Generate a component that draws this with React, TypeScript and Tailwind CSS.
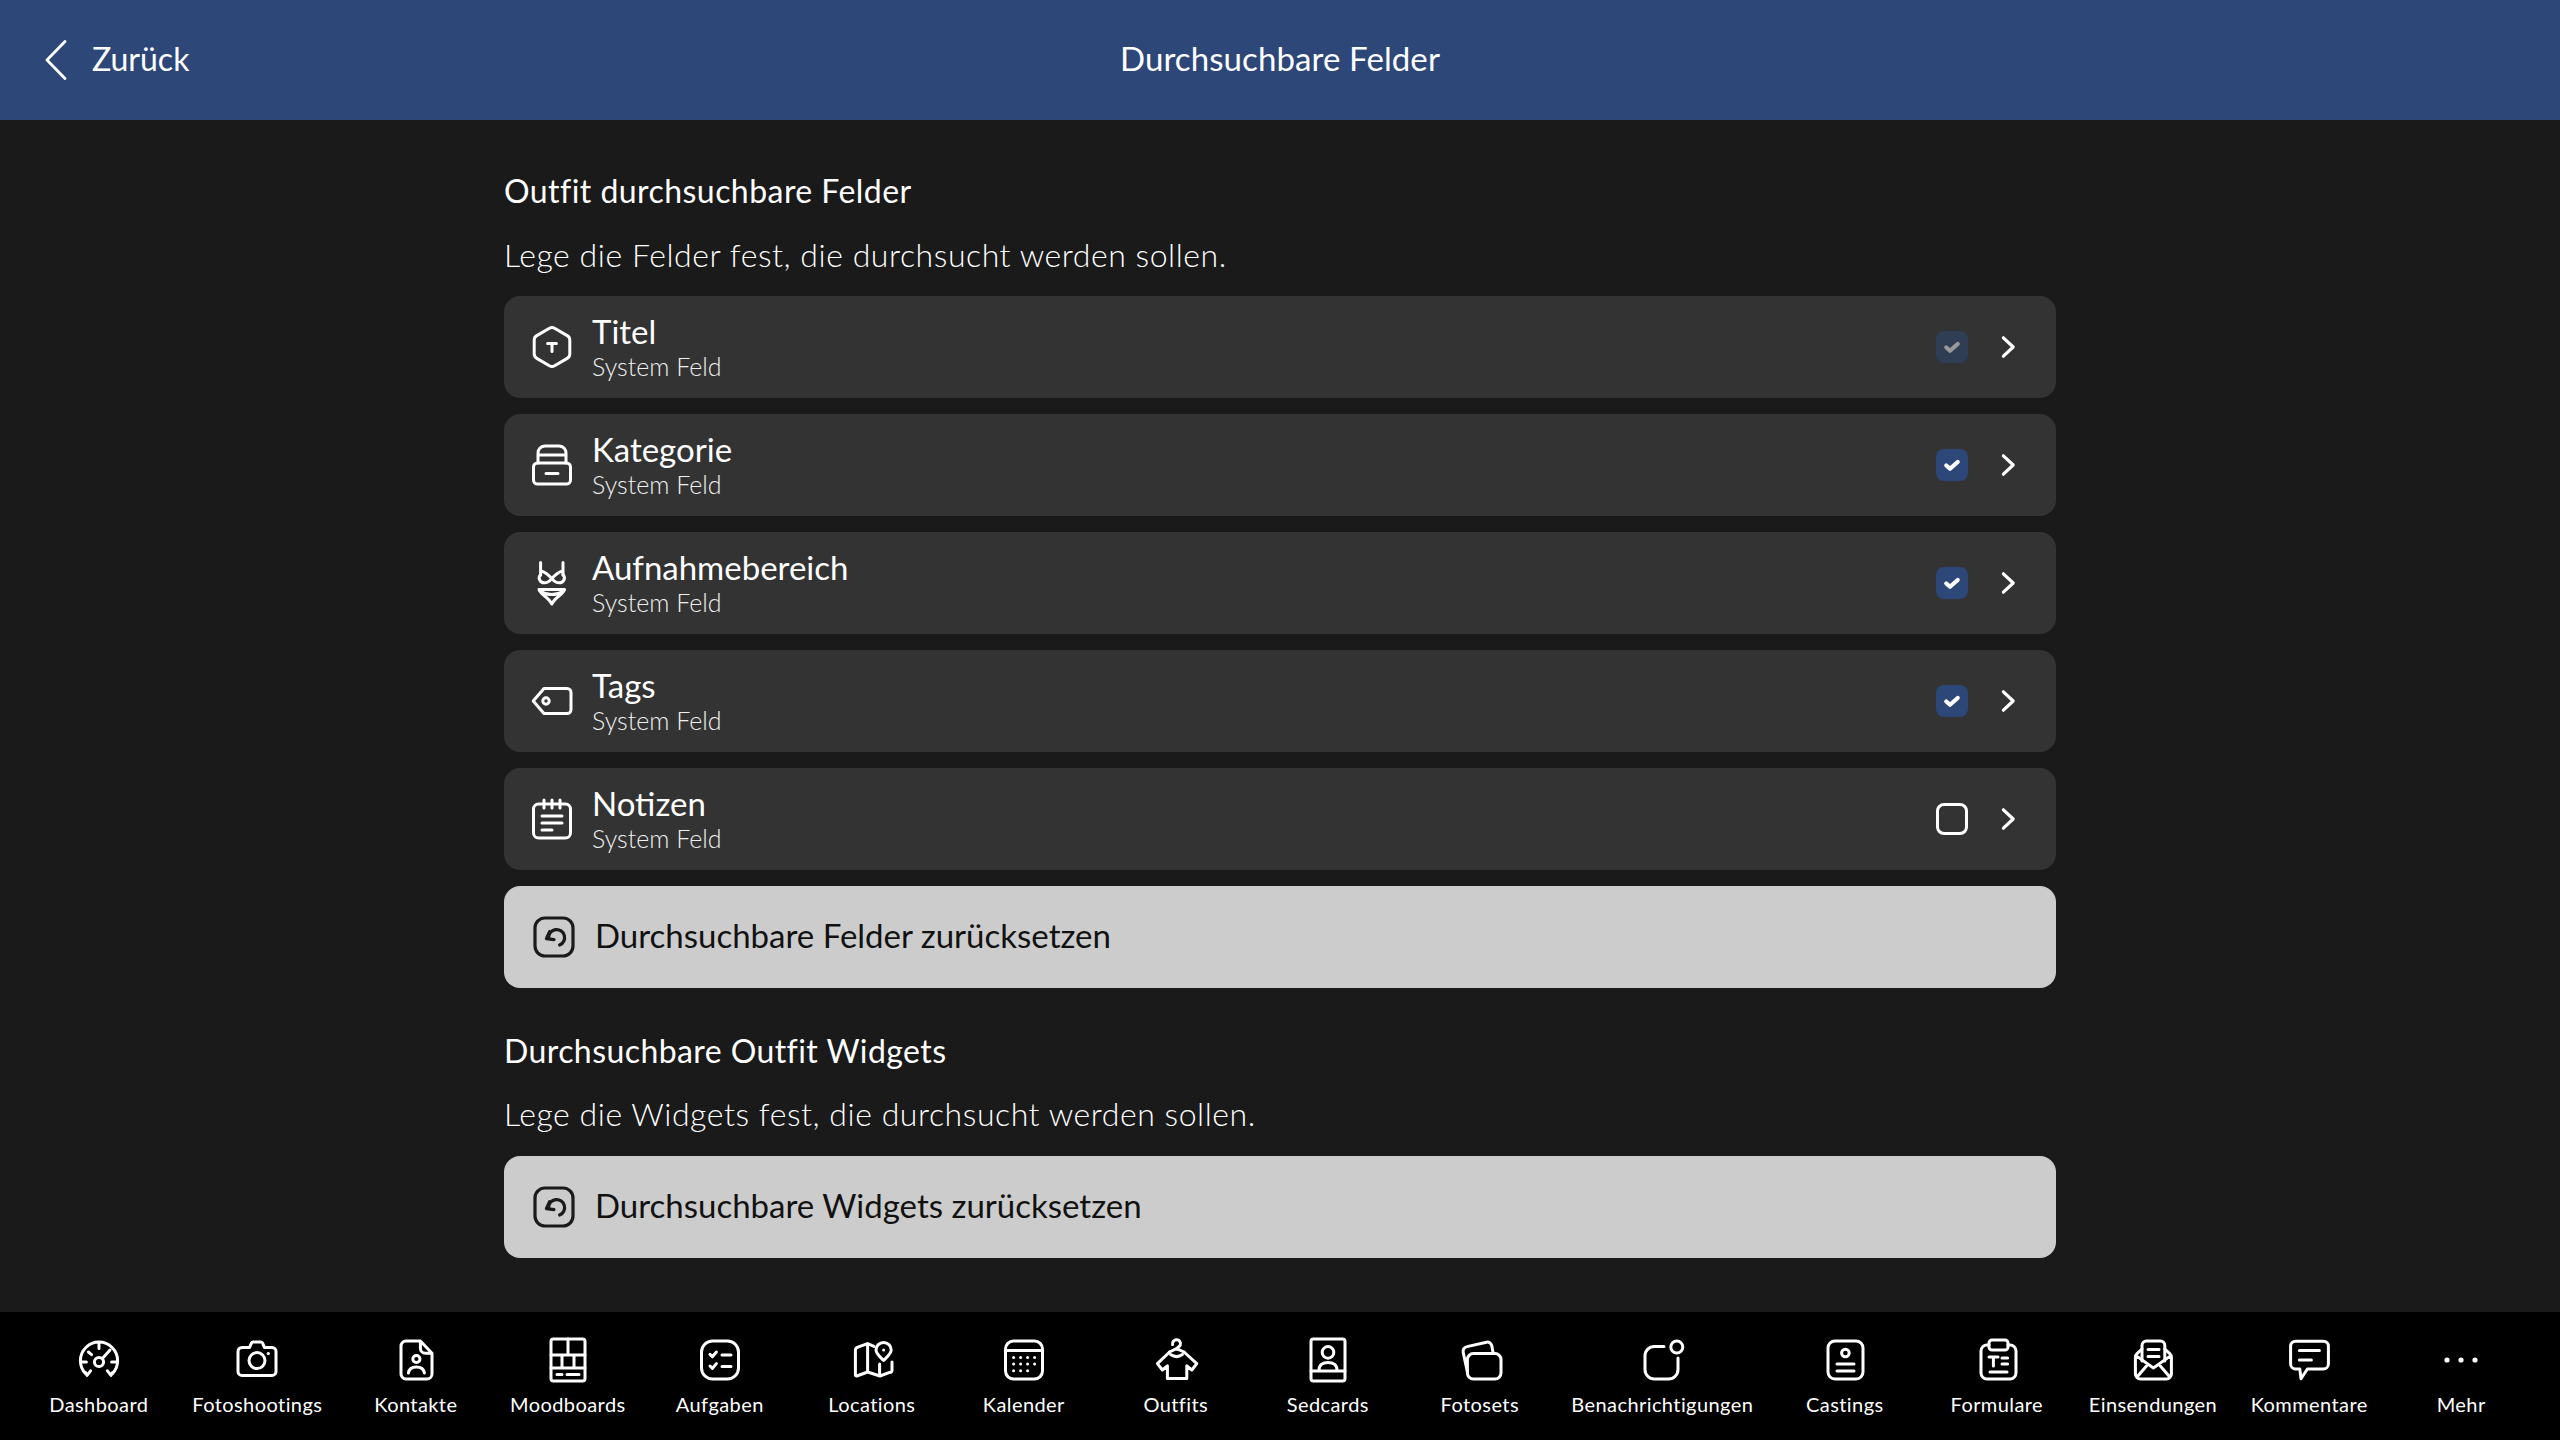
import React from "react";

const S = ({ children, color = "white", w = 1.5, className = "w-12 h-12 shrink-0" }: { children: React.ReactNode; color?: string; w?: number; className?: string }) => (
  <svg viewBox="0 0 24 24" fill="none" stroke={color} strokeWidth={w} strokeLinecap="round" strokeLinejoin="round" className={className}>
    {children}
  </svg>
);

const I = {
  titel: <S><path d="M10.7 2.600a2.600 2.600 0 0 1 2.600 0l6.300 3.700a2.600 2.600 0 0 1 1.300 2.200v7a2.600 2.600 0 0 1-1.300 2.200l-6.300 3.700a2.600 2.600 0 0 1-2.600 0l-6.300-3.700a2.600 2.600 0 0 1-1.300-2.200v-7a2.600 2.600 0 0 1 1.300-2.200z" /><path d="M9.800 10.300h4.400M12 10.300v4" /></S>,
  kategorie: <S><rect x="2.750" y="11" width="18.500" height="10.500" rx="2" /><path d="M5 11V6a3.500 3.500 0 0 1 3.500-3.500h7A3.500 3.500 0 0 1 19 6v5M5 7h14M9 16.200h6" /></S>,
  bereich: <S><path d="M6.300 1.700v6.300M17.500 1.700v6.300M6.300 5.800Q9.500 7 11.900 9.800Q14.300 7 17.500 5.800" /><path d="M6.300 7.800C4.700 9.500 6 11.900 8.200 11.900C9.800 11.900 11 10.900 11.900 9.800C12.800 10.900 14 11.900 15.600 11.900C17.800 11.900 19.100 9.500 17.500 7.800" /><path d="M5.500 15.200H18.300C18 17.500 14 18.500 11.900 22.500C9.800 18.500 5.800 17.500 5.500 15.200zM6.500 16.200Q9 17.800 11.900 17.800Q14.800 17.800 17.300 16.200" /></S>,
  tags: <S><path d="M8 5.700h11.500a2 2 0 0 1 2 2v8.600a2 2 0 0 1-2 2H8L2.600 12z" /><circle cx="9" cy="12" r="1.600" /></S>,
  notizen: <S><rect x="2.750" y="4.500" width="18.500" height="17" rx="2.500" /><path d="M8 2.500v4M12 2.500v4M16 2.500v4M7 10.500h10M7 14h10M7 17.500h5" /></S>,
  chevron: <S w={1.600}><path d="M9.700 7.400 14.600 12l-4.900 4.600" /></S>,
  dashboard: <S><path d="M5.300 18.800A9.300 9.300 0 1 1 18.700 18.800M5.300 18.300 6 19.700 7.800 17.400M18.700 18.300 18 19.700 16.200 17.400M12 3.500v2.800M6.700 8 8.300 9.300M2.900 13h2.800M18.300 13h2.800M13.700 11.200 17.500 7" /><circle cx="12" cy="13" r="2.300" /></S>,
  camera: <S><path d="M8.300 5.700 9.200 3.600A1 1 0 0 1 10 3h4a1 1 0 0 1 .8.600l.9 2.100h3.800a2 2 0 0 1 2 2v10a2 2 0 0 1-2 2h-15a2 2 0 0 1-2-2v-10a2 2 0 0 1 2-2z" /><circle cx="12" cy="12.300" r="4" /><path d="M17.600 8.800h.1" /></S>,
  kontakte: <S><path d="M7 2.500h7.200L20 8.600V19a2.500 2.500 0 0 1-2.500 2.500H7A2.500 2.500 0 0 1 4.500 19V5A2.500 2.500 0 0 1 7 2.500zM14.200 2.500v3.600a2.500 2.500 0 0 0 2.500 2.500H20" /><circle cx="12.200" cy="11.500" r="1.800" /><path d="M8.200 18.500c.3-2 1.800-3 4-3s3.700 1 4 3" /></S>,
  moodboards: <S><rect x="3.500" y="1.500" width="17" height="21" rx="1.200" /><path d="M3.500 9.500h17M12 1.500v8M3.500 16h17M9 9.500V16M15 9.500V16M6.500 19.200h2.500M11.500 19.200h6" /></S>,
  aufgaben: <S><rect x="2.750" y="2.500" width="18.500" height="19" rx="5.500" /><path d="M7 9.200l1.200 1.200 2-2.400M7 15l1.200 1.200 2-2.400M13 9.500h4.500M13 15.300h4.500" /></S>,
  locations: <S><path d="M13 5.200 9.800 3.800 4.900 5.600A1.500 1.500 0 0 0 3.700 7v12.500a.5.500 0 0 0 .7.500l5.400-2 6.200 2 4.800-1.800a1.200 1.200 0 0 0 1.200-1V13M9.800 3.800V18M15.800 14v6" /><path d="M17.800 12.200C15.500 10 14 8.800 14 7a3.800 3.800 0 0 1 7.600 0c0 1.800-1.500 3-3.800 5.200z" /><path d="M17.800 7h.01" /></S>,
  kalender: <S><rect x="2.750" y="2.500" width="18.500" height="19" rx="4" /><path d="M2.750 7.200h18.500" /><g stroke="none" fill="white"><circle cx="6.800" cy="10.700" r=".75" /><circle cx="10.300" cy="10.700" r=".75" /><circle cx="13.800" cy="10.700" r=".75" /><circle cx="17.300" cy="10.700" r=".75" /><circle cx="6.800" cy="14" r=".75" /><circle cx="10.300" cy="14" r=".75" /><circle cx="13.800" cy="14" r=".75" /><circle cx="17.300" cy="14" r=".75" /><circle cx="6.800" cy="17.400" r=".75" /><circle cx="10.300" cy="17.400" r=".75" /><circle cx="13.800" cy="17.400" r=".75" /></g></S>,
  outfits: <S><path d="M10.300 4.300a2 2 0 1 1 3.800.4c-.3.700-1.800 1-1.800 1.700M8.700 8l3.600-1.700L16 8M9.300 9.300Q12.300 11.300 15.200 9.300" /><path d="M8.800 8 2.700 13.800 5.200 17 7.700 14.900V21.300H17.400V14.900L19.900 17 22.400 13.800 16 8" /></S>,
  sedcards: <S><rect x="3.500" y="1.500" width="17" height="21" rx="1.200" /><circle cx="12" cy="8.200" r="2.900" /><path d="M7.500 17c0-2.600 2-3.800 4.500-3.800s4.500 1.200 4.500 3.800M3.500 17.500h17" /></S>,
  fotosets: <S><rect x="5.700" y="8.800" width="16.800" height="12.700" rx="3" /><path d="M5.700 18 3.600 8.200a2.400 2.400 0 0 1 1.900-2.900L15.300 3.100a2.200 2.200 0 0 1 2.600 1.800l.7 3.900" /></S>,
  benach: <S><circle cx="19.400" cy="5.500" r="3" /><path d="M13 5.200H8.200a4.700 4.700 0 0 0-4.700 4.700v6.900a4.700 4.700 0 0 0 4.700 4.700h7.100a4.700 4.700 0 0 0 4.700-4.700V11" /></S>,
  castings: <S><rect x="3.500" y="2.500" width="17.500" height="19" rx="3.500" /><circle cx="12.200" cy="8.500" r="1.900" /><path d="M8 14h8.500M8 17.500h8.500" /></S>,
  formulare: <S><path d="M8 4.500H7a3 3 0 0 0-3 3v11a3 3 0 0 0 3 3h11.500a3 3 0 0 0 3-3v-11a3 3 0 0 0-3-3h-1" /><rect x="8" y="2" width="9.500" height="5" rx="1.500" /><path d="M8 10.500h4.500M10.200 10.500V15M14.500 11h2.800M14.500 14h2.800M8.500 18h8.500" /></S>,
  einsend: <S><path d="M6.500 12.500V4.700a2.200 2.200 0 0 1 2.200-2.200h7a2.200 2.200 0 0 1 2.200 2.200v7.800" /><path d="M6.500 6.500 4 8.800a2.500 2.500 0 0 0-.8 1.800V19a2.500 2.500 0 0 0 2.500 2.500h13A2.500 2.500 0 0 0 21.200 19v-8.400a2.500 2.500 0 0 0-.8-1.800L17.900 6.500M3.500 9.800 12.200 16l8.700-6.200M4 20.500l5.500-6.400M20.400 20.500l-5.500-6.400M9.500 6.700h5.500M9.500 10.300h5.500" /></S>,
  komment: <S><path d="M5.300 2.600h13.900a2.500 2.500 0 0 1 2.500 2.500v8.900a2.500 2.500 0 0 1-2.500 2.500h-8L8 21.400l-.6-4.900H5.300A2.500 2.500 0 0 1 2.800 14V5.100a2.500 2.500 0 0 1 2.500-2.500z" /><path d="M7.200 7.300h10M7.200 12h6" /></S>,
  mehr: <S w={0}><g fill="white" stroke="none"><circle cx="5" cy="12" r="1.300" /><circle cx="12" cy="12" r="1.300" /><circle cx="19" cy="12" r="1.300" /></g></S>,
};

const Reset = () => (
  <S color="#1a1a1a" w={1.6}>
    <rect x="2.500" y="2.500" width="19" height="19" rx="5" />
    <path d="M9.800 9.300 8.200 12.800l3.800.5" />
    <path d="M9.300 12.300A4 4 0 1 1 14.800 16" />
  </S>
);

const Check = () => (
  <svg viewBox="0 0 32 32" fill="none" stroke="white" strokeWidth="4.200" strokeLinecap="round" strokeLinejoin="round" className="w-8 h-8">
    <path d="M10.300 16.500l3.700 3.300 7.700-6.800" />
  </svg>
);

const rows = [
  { t: "Titel", i: I.titel, state: "dim" },
  { t: "Kategorie", i: I.kategorie, state: "on" },
  { t: "Aufnahmebereich", i: I.bereich, state: "on" },
  { t: "Tags", i: I.tags, state: "on" },
  { t: "Notizen", i: I.notizen, state: "off" },
];

const nav = [
  ["Dashboard", I.dashboard, "min-w-[152px] px-4"],
  ["Fotoshootings", I.camera, "w-[165px]"],
  ["Kontakte", I.kontakte, "min-w-[152px] px-4"],
  ["Moodboards", I.moodboards, "min-w-[152px] px-4"],
  ["Aufgaben", I.aufgaben, "min-w-[152px] px-4"],
  ["Locations", I.locations, "min-w-[152px] px-4"],
  ["Kalender", I.kalender, "min-w-[152px] px-4"],
  ["Outfits", I.outfits, "min-w-[152px] px-4"],
  ["Sedcards", I.sedcards, "min-w-[152px] px-4"],
  ["Fotosets", I.fotosets, "min-w-[152px] px-4"],
  ["Benachrichtigungen", I.benach, "w-[213px]"],
  ["Castings", I.castings, "min-w-[152px] px-4"],
  ["Formulare", I.formulare, "min-w-[152px] px-4"],
  ["Einsendungen", I.einsend, "min-w-[152px] px-4"],
  ["Kommentare", I.komment, "min-w-[152px] px-4"],
  ["Mehr", I.mehr, "min-w-[152px] px-4"],
] as const;

const Row = ({ t, i, state }: { t: string; i: React.ReactNode; state: string }) => (
  <div className="h-[102px] rounded-[16px] bg-[#333333] flex items-center pl-6 pr-6 gap-4">
    {i}
    <div className="flex-1 flex flex-col pb-[2px]">
      <div className="text-[33px] leading-[40px] text-white">{t}</div>
      <div className="text-[25px] leading-[30px] text-[#f0f0f0] font-light">System Feld</div>
    </div>
    {state === "off" ? (
      <div className="w-8 h-8 rounded-[8px] border-[3px] border-white" />
    ) : (
      <div className={`w-8 h-8 rounded-[8px] bg-[#2c4778] flex items-center justify-center ${state === "dim" ? "opacity-50" : ""}`}>
        <Check />
      </div>
    )}
    {I.chevron}
  </div>
);

const ResetBtn = ({ label }: { label: string }) => (
  <div className="h-[102px] rounded-[16px] bg-[#cccccc] flex items-center pl-[26px] gap-[17px] text-[33px] text-[#111111]">
    <Reset />
    <span className="pb-[3px]">{label}</span>
  </div>
);

export default function App() {
  return (
    <div className="h-screen w-full flex flex-col bg-[#1a1a1a] overflow-hidden font-['Lato',sans-serif]">
      <header className="h-[120px] shrink-0 bg-[#2c4778] flex items-center relative justify-center">
        <div className="absolute left-[40px] top-0 h-full flex items-center gap-[24px] text-white text-[32px]">
          <svg viewBox="0 0 28 40" fill="none" stroke="white" strokeWidth="2.800" strokeLinecap="round" strokeLinejoin="round" className="w-[28px] h-10">
            <path d="M25 1.500 7 20l18 18.500" />
          </svg>
          <span className="pb-[3px]">Zurück</span>
        </div>
        <div className="text-white text-[33px] tracking-[0.1px] pb-[3px]">Durchsuchbare Felder</div>
      </header>

      <main className="flex-1 px-[504px] pt-[47px]">
        <h2 className="text-[32px] leading-[48px] tracking-[0.45px] text-white">Outfit durchsuchbare Felder</h2>
        <p className="mt-4 mb-[17px] text-[32px] leading-[48px] tracking-[0.55px] text-white font-light">Lege die Felder fest, die durchsucht werden sollen.</p>
        <div className="flex flex-col gap-4">
          {rows.map((r) => (
            <Row key={r.t} {...r} />
          ))}
          <ResetBtn label="Durchsuchbare Felder zurücksetzen" />
        </div>
        <h2 className="mt-[39px] text-[32px] leading-[48px] tracking-[0.42px] text-white">Durchsuchbare Outfit Widgets</h2>
        <p className="mt-[15px] mb-[18px] text-[32px] leading-[48px] tracking-[0.55px] text-white font-light">Lege die Widgets fest, die durchsucht werden sollen.</p>
        <ResetBtn label="Durchsuchbare Widgets zurücksetzen" />
      </main>

      <nav className="h-[128px] shrink-0 bg-black flex justify-center pt-6">
        {nav.map(([label, icon, cls]) => (
          <div key={label} className={`${cls} flex flex-col items-center`}>
            {icon}
            <div className="mt-[6px] text-[20px] leading-[28px] tracking-[0.42px] text-white whitespace-nowrap">{label}</div>
          </div>
        ))}
      </nav>
    </div>
  );
}
